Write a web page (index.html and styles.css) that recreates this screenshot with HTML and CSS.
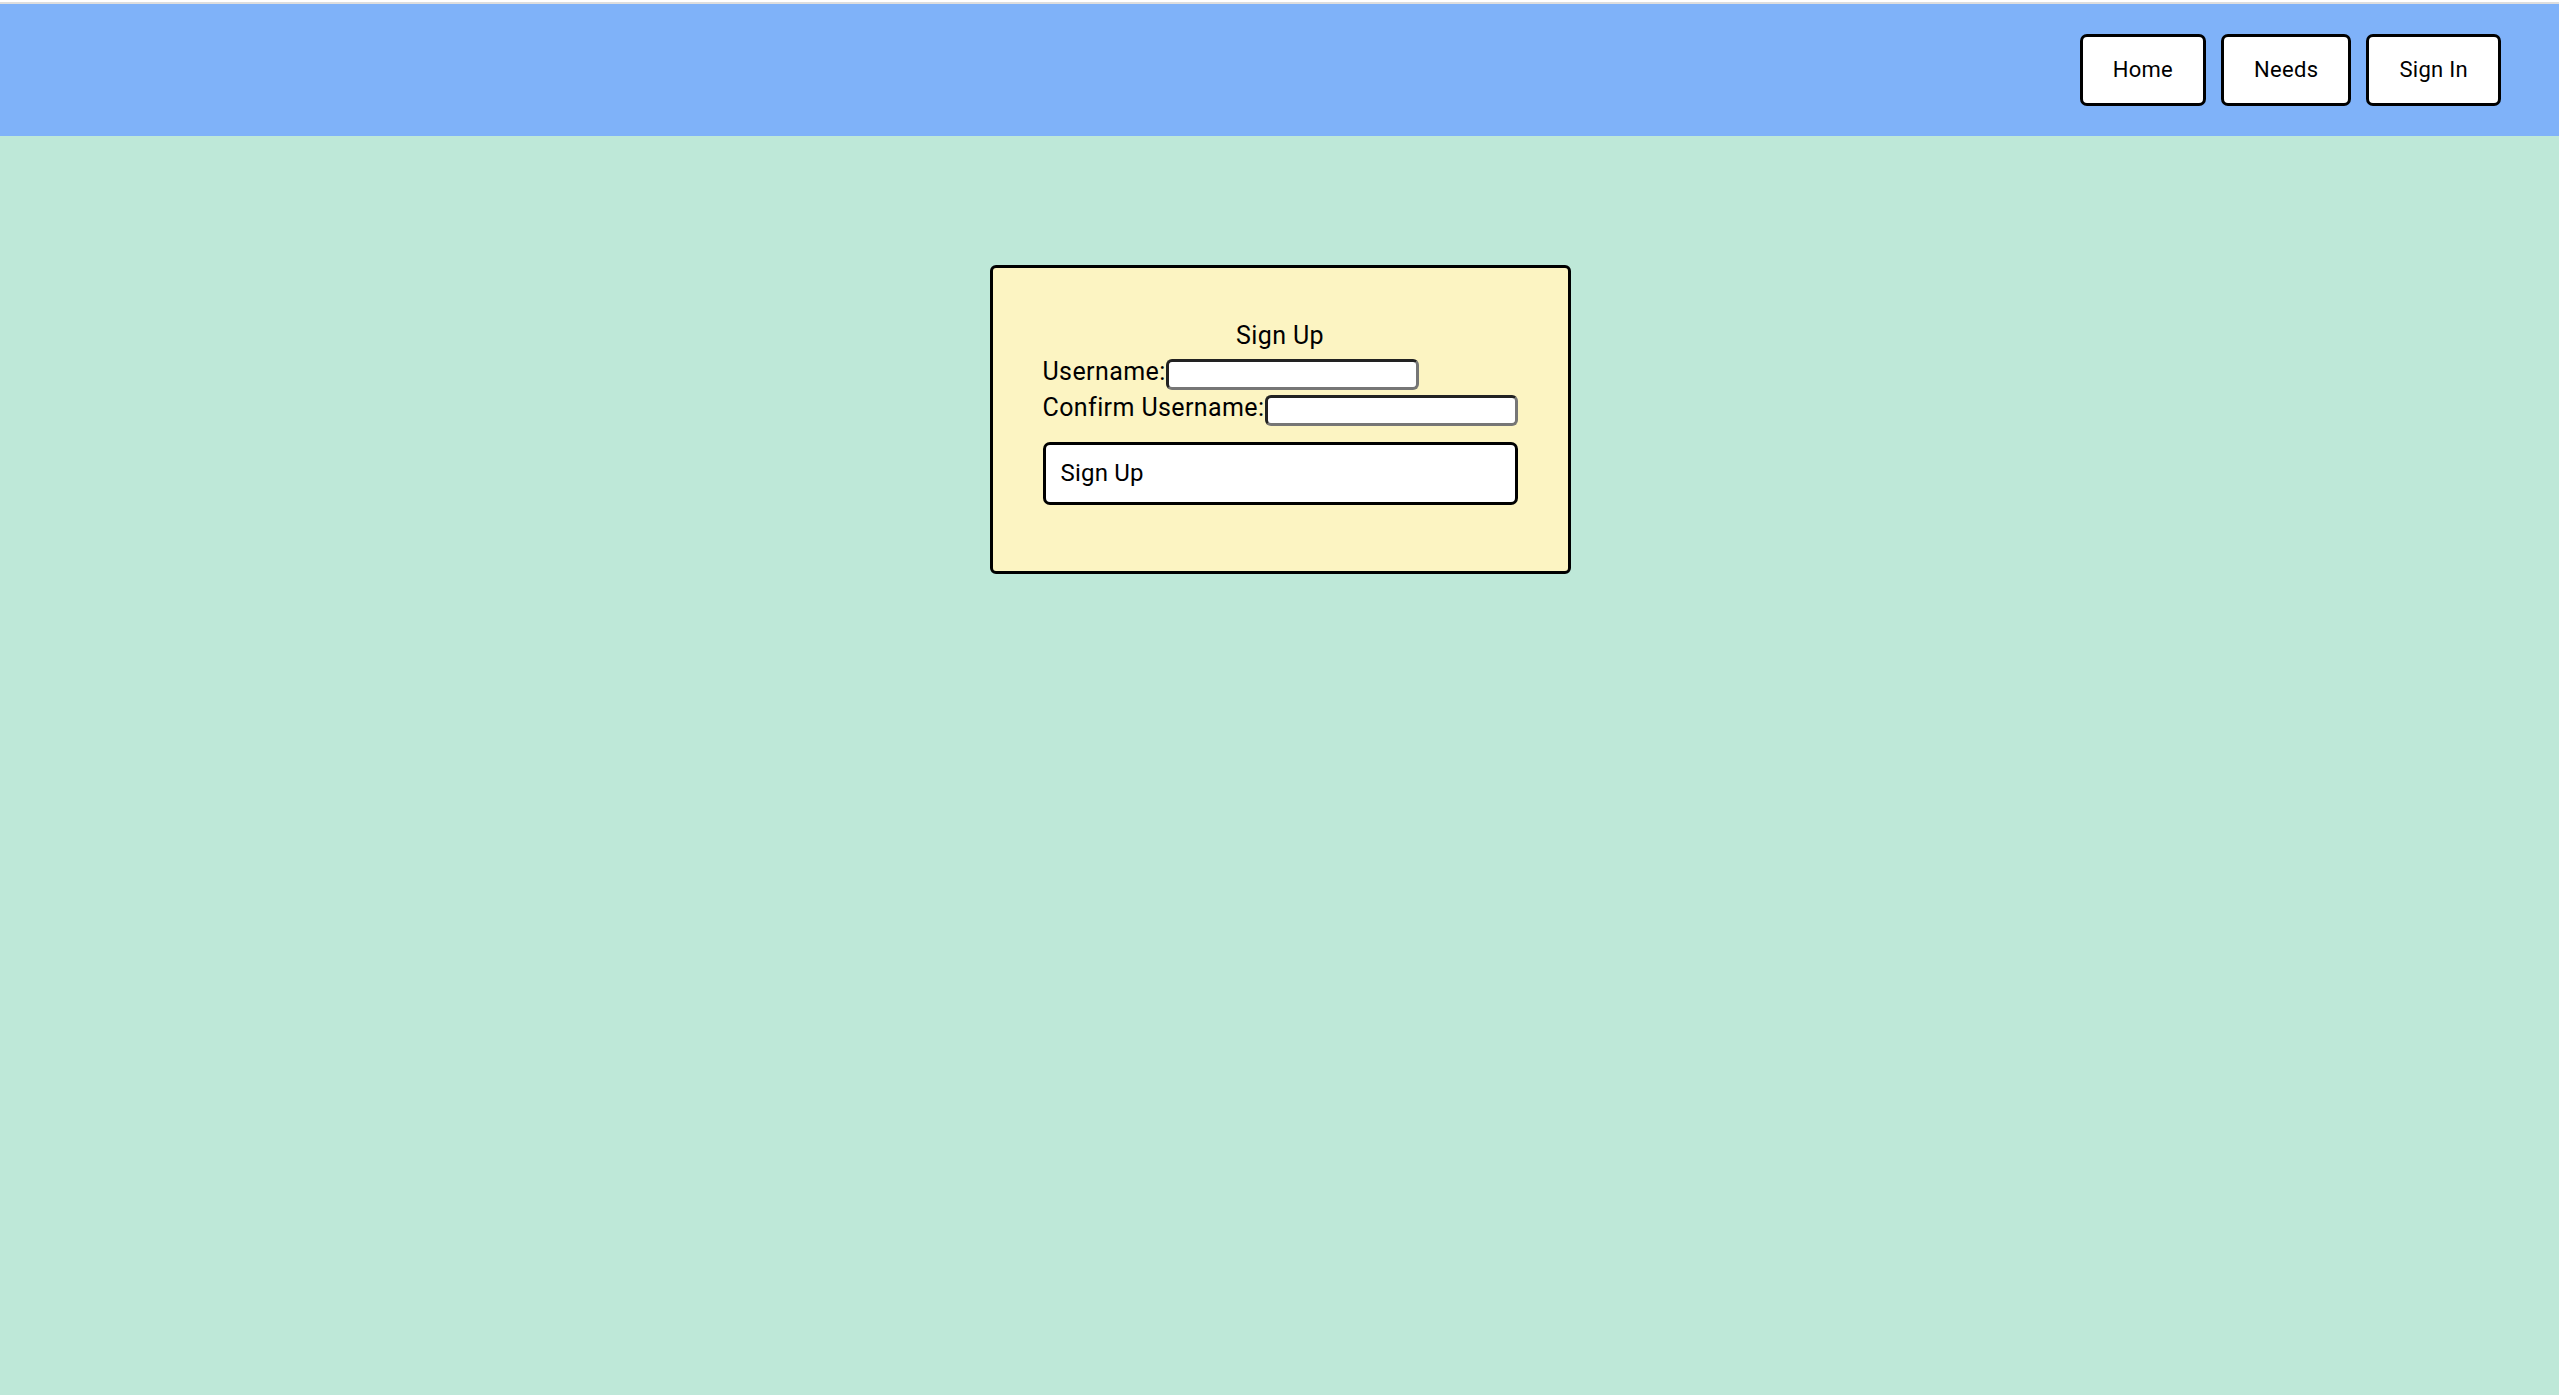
FILE: index.html
```html
<!DOCTYPE html>
<html lang="en">
<head>
<meta charset="utf-8">
<title>Sign Up</title>
<link rel="stylesheet" href="styles.css">
</head>
<body>
<header class="topbar">
  <nav class="nav">
    <button class="nav-btn" type="button">Home</button>
    <button class="nav-btn" type="button">Needs</button>
    <button class="nav-btn" type="button">Sign In</button>
  </nav>
</header>
<main class="main">
  <form class="card">
    <div class="card-title">Sign Up</div>
    <div class="field">
      <label class="field-label" for="u1">Username:</label>
      <input class="field-input" id="u1" type="text">
    </div>
    <div class="field">
      <label class="field-label" for="u2">Confirm Username:</label>
      <input class="field-input" id="u2" type="text">
    </div>
    <button class="submit-btn" type="button">Sign Up</button>
  </form>
</main>
</body>
</html>
```
FILE: styles.css
```css
html, body {
  margin: 0;
  padding: 0;
}
body {
  background: #ffffff;
  font-family: Roboto, "Liberation Sans", sans-serif;
  color: #000;
}
.topbar {
  margin-top: 2px;
  border-top: 2px solid #dedede;
  background: #7fb2f9;
  height: 132px;
  display: flex;
  align-items: center;
  justify-content: flex-end;
  padding-right: 58px;
}
.nav {
  display: flex;
  gap: 15px;
}
.nav-btn {
  font-family: Roboto, "Liberation Sans", sans-serif;
  font-size: 22px;
  line-height: 26px;
  letter-spacing: 0.3px;
  color: #000;
  background: #fff;
  border: 3px solid #000;
  border-radius: 7px;
  padding: 20px 30px;
  height: 72px;
  box-sizing: border-box;
  cursor: pointer;
}
.main {
  background: #bee8d8;
  min-height: calc(100vh - 136px);
  padding-top: 129px;
  box-sizing: border-box;
  display: flex;
  justify-content: center;
  align-items: flex-start;
}
.card {
  margin: 0 0 0 1px;
  width: 475px;
  background: #fcf4c2;
  border: 3px solid #000;
  border-radius: 6px;
  padding: 53px 50px 66px 50px;
}
.card-title {
  text-align: center;
  font-size: 25px;
  line-height: 29px;
  letter-spacing: 0.4px;
  margin-bottom: 9px;
}
.field {
  display: flex;
  align-items: flex-start;
  margin-bottom: 5px;
}
.field-label {
  font-size: 25px;
  line-height: 25px;
  letter-spacing: 0.4px;
  white-space: nowrap;
}
.field-input {
  width: 253px;
  height: 31px;
  box-sizing: border-box;
  border-width: 3px;
  border-style: solid;
  border-color: #222222 #767676 #767676 #222222;
  border-radius: 6px;
  background: #fff;
  padding: 1px 4px;
  margin: 0;
  font-family: Roboto, "Liberation Sans", sans-serif;
  font-size: 16px;
}
.submit-btn {
  display: block;
  width: 100%;
  height: 63px;
  box-sizing: border-box;
  margin-top: 16px;
  text-align: left;
  font-family: Roboto, "Liberation Sans", sans-serif;
  font-size: 24px;
  line-height: 28px;
  letter-spacing: 0.2px;
  color: #000;
  background: #fff;
  border: 3px solid #000;
  border-radius: 7px;
  padding: 14px 15px 15px 15px;
  cursor: pointer;
}
```
